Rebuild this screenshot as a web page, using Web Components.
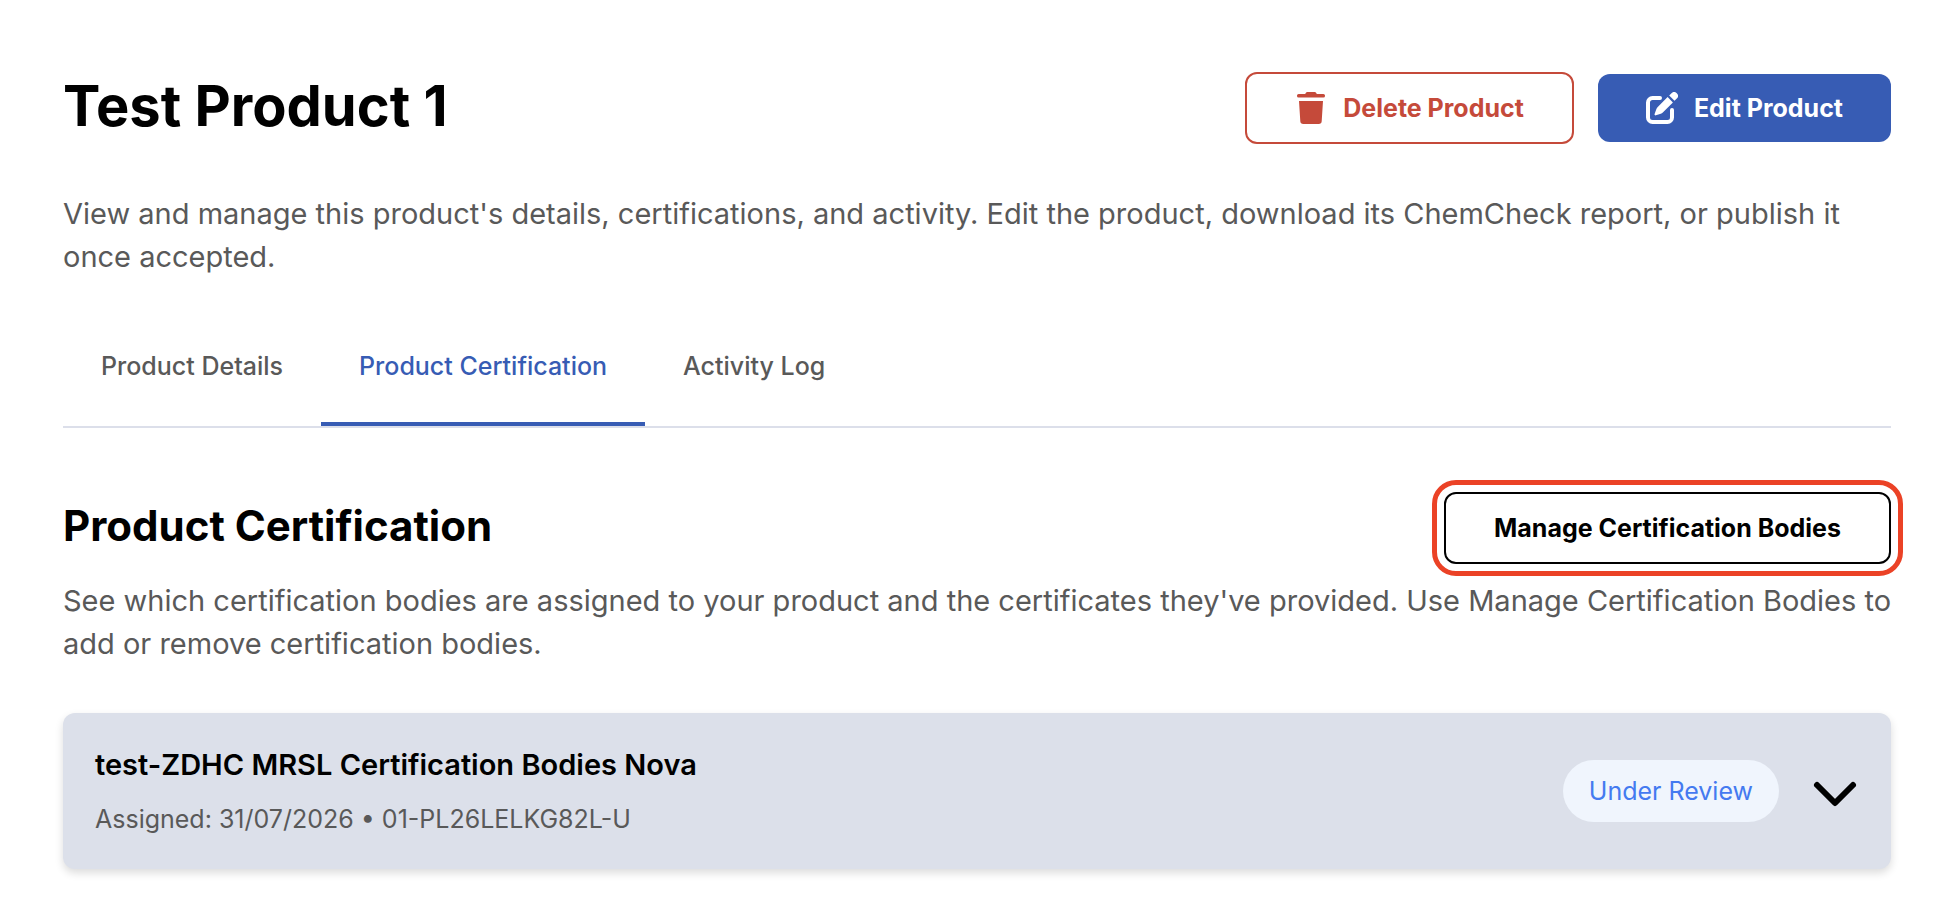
<!DOCTYPE html>
<html lang="en">
<head>
<meta charset="utf-8">
<meta name="viewport" content="width=device-width, initial-scale=1">
<title>Test Product 1</title>
<style>
    body{
        margin: 0;
        background: #fff;
        color: #000;
        font-family: Inter, "Liberation Sans", sans-serif;
    }
</style>
</head>
<body>
<product-page></product-page>
<script>
const icons = {
    trash: `<svg viewBox="0 0 32 32" width="32" height="32" fill="currentColor" aria-hidden="true">
        <path d="M3.600 2h6.600l.7-1.200Q11.400 0 12.300 0h7.400q.9 0 1.400.8l.7 1.200h6.600a1.600 1.600 0 0 1 1.600 1.600v.4a1.600 1.600 0 0 1-1.600 1.600H3.600A1.600 1.600 0 0 1 2 4v-.4A1.600 1.600 0 0 1 3.600 2z"/>
        <path d="M4 9h24l-1.300 20.200A3 3 0 0 1 23.700 32H8.300a3 3 0 0 1-3-2.800z"/>
    </svg>`,
    edit: `<svg viewBox="0 0 32 32" width="32" height="32" aria-hidden="true">
        <path d="M14 6H6.500A4.500 4.500 0 0 0 2 10.500v15A4.500 4.500 0 0 0 6.500 30h15a4.500 4.500 0 0 0 4.500-4.500V18" fill="none" stroke="currentColor" stroke-width="4" stroke-linecap="round"/>
        <path d="M21.600 5.100l5.300 5.300L16.800 20.500a5 5 0 0 1-2 1.200l-4.900 1.600a1 1 0 0 1-1.300-1.300l1.700-4.800a5 5 0 0 1 1.200-1.900zM23.200 3.500l2.300-2.300a3.700 3.700 0 0 1 5.300 5.300l-2.300 2.300z" fill="currentColor"/>
    </svg>`
};

class AppButton extends HTMLElement{
    constructor(){
        super();
        this.attachShadow({mode: "open"});
    }

    connectedCallback(){
        this.shadowRoot.innerHTML = `
        <style>
            :host{
                display: block;
                flex-shrink: 0;
            }
            button{
                display: flex;
                align-items: center;
                gap: 16px;
                padding: 16px 48px;
                border: 2px solid #000;
                border-radius: 12px;
                background: #fff;
                color: #000;
                font: 700 25px/36px Inter, "Liberation Sans", sans-serif;
                white-space: nowrap;
                cursor: pointer;
            }
            svg{
                display: block;
            }
            :host([variant="danger"]) button{
                border-color: #c54a3a;
                color: #c54a3a;
            }
            :host([variant="primary"]) button{
                border: 0;
                background: #375cb4;
                color: #fff;
            }
            :host([highlighted]) button{
                outline: 5px solid #eb4226;
                outline-offset: 7px;
            }
        </style>
        <button type="button">${icons[this.getAttribute("icon")] || ""}<slot></slot></button>
        `;
    }
}

class ProductHeader extends HTMLElement{
    constructor(){
        super();
        this.attachShadow({mode: "open"}).innerHTML = `
        <style>
            :host{
                display: block;
            }
            #top{
                display: flex;
                justify-content: space-between;
                align-items: flex-start;
                gap: 24px;
            }
            #actions{
                display: flex;
                align-items: center;
                gap: 24px;
            }
            h1{
                margin: 0;
                font-size: 56px;
                line-height: 68px;
                font-weight: 700;
            }
            p{
                margin: 48px 0 0;
                color: #595959;
                font-size: 29px;
                line-height: 43px;
            }
        </style>
        <header>
            <div id="top">
                <h1><slot name="title"></slot></h1>
                <div id="actions"><slot name="actions"></slot></div>
            </div>
            <p><slot></slot></p>
        </header>
        `;
    }
}

class ProductTabs extends HTMLElement{
    constructor(){
        super();
        this.attachShadow({mode: "open"});
    }

    connectedCallback(){
        const active = this.getAttribute("active");
        const tabs = this.getAttribute("tabs").split(",");
        this.shadowRoot.innerHTML = `
        <style>
            :host{
                display: block;
                margin-top: 32px;
            }
            div{
                display: flex;
                border-bottom: 2px solid #dcdfea;
            }
            button{
                padding: 36px 38px;
                border: 0;
                border-bottom: 4px solid transparent;
                background: none;
                color: #595959;
                font: 500 25px/40px Inter, "Liberation Sans", sans-serif;
                cursor: pointer;
            }
            button[aria-selected="true"]{
                border-color: #375cb4;
                color: #375cb4;
            }
        </style>
        <div role="tablist">
            ${tabs.map(tab => `<button type="button" role="tab" aria-selected="${tab === active}">${tab}</button>`).join("")}
        </div>
        `;
    }
}

class CertificationSection extends HTMLElement{
    constructor(){
        super();
        this.attachShadow({mode: "open"}).innerHTML = `
        <style>
            :host{
                display: block;
                margin-top: 64px;
            }
            #top{
                display: flex;
                justify-content: space-between;
                align-items: flex-start;
                gap: 24px;
            }
            h2{
                margin: 0;
                font-size: 42px;
                line-height: 68px;
                font-weight: 700;
            }
            p{
                margin: 15px -16px 48px 0;
                color: #595959;
                font-size: 29px;
                line-height: 43px;
            }
        </style>
        <section>
            <div id="top">
                <h2><slot name="title"></slot></h2>
                <slot name="action"></slot>
            </div>
            <p><slot></slot></p>
            <slot name="items"></slot>
        </section>
        `;
    }
}

class StatusBadge extends HTMLElement{
    constructor(){
        super();
        this.attachShadow({mode: "open"}).innerHTML = `
        <style>
            :host{
                display: block;
                padding: 12px 26px;
                border-radius: 32px;
                background: #f0f5fd;
                color: #447af0;
                font-size: 25px;
                line-height: 38px;
                white-space: nowrap;
            }
        </style>
        <slot></slot>
        `;
    }
}

class CertificationCard extends HTMLElement{
    constructor(){
        super();
        this.attachShadow({mode: "open"}).innerHTML = `
        <style>
            :host{
                display: block;
            }
            article{
                display: flex;
                justify-content: space-between;
                align-items: center;
                gap: 32px;
                padding: 32px;
                border-radius: 12px;
                background: #dce0ea;
                box-shadow: 0 4px 8px rgba(0,0,0,.14);
            }
            h3{
                margin: 0 0 16px;
                font-size: 29px;
                line-height: 40px;
                font-weight: 600;
            }
            #meta{
                color: #595959;
                font-size: 25px;
                line-height: 36px;
            }
            #status{
                display: flex;
                align-items: center;
                gap: 32px;
            }
            button{
                padding: 0;
                border: 0;
                background: none;
                color: inherit;
                cursor: pointer;
            }
            svg{
                display: block;
            }
        </style>
        <article>
            <div>
                <h3><slot name="name"></slot></h3>
                <div id="meta"><slot></slot></div>
            </div>
            <div id="status">
                <slot name="status"></slot>
                <button type="button" aria-label="Show certificates" aria-expanded="false">
                    <svg viewBox="0 0 48 48" width="48" height="48" fill="none" stroke="currentColor" stroke-width="6" stroke-linecap="round" stroke-linejoin="round" aria-hidden="true">
                        <path d="M6 18l18 18 18-18"/>
                    </svg>
                </button>
            </div>
        </article>
        `;
    }
}

class ProductPage extends HTMLElement{
    constructor(){
        super();
        this.attachShadow({mode: "open"}).innerHTML = `
        <style>
            :host{
                display: block;
                padding: 72px 51px 51px 63px;
            }
        </style>
        <main>
            <product-header>
                <span slot="title">Test Product 1</span>
                <app-button slot="actions" variant="danger" icon="trash">Delete Product</app-button>
                <app-button slot="actions" variant="primary" icon="edit">Edit Product</app-button>
                View and manage this product's details, certifications, and activity. Edit the product, download its ChemCheck report, or publish it once accepted.
            </product-header>
            <product-tabs tabs="Product Details,Product Certification,Activity Log" active="Product Certification"></product-tabs>
            <certification-section>
                <span slot="title">Product Certification</span>
                <app-button slot="action" highlighted>Manage Certification Bodies</app-button>
                See which certification bodies are assigned to your product and the certificates they've provided. Use Manage Certification Bodies to add or remove certification bodies.
                <certification-card slot="items">
                    <span slot="name">test-ZDHC MRSL Certification Bodies Nova</span>
                    <status-badge slot="status">Under Review</status-badge>
                    Assigned: 31/07/2026 • 01-PL26LELKG82L-U
                </certification-card>
            </certification-section>
        </main>
        `;
    }
}

customElements.define("app-button", AppButton);
customElements.define("product-header", ProductHeader);
customElements.define("product-tabs", ProductTabs);
customElements.define("certification-section", CertificationSection);
customElements.define("status-badge", StatusBadge);
customElements.define("certification-card", CertificationCard);
customElements.define("product-page", ProductPage);
</script>
</body>
</html>
